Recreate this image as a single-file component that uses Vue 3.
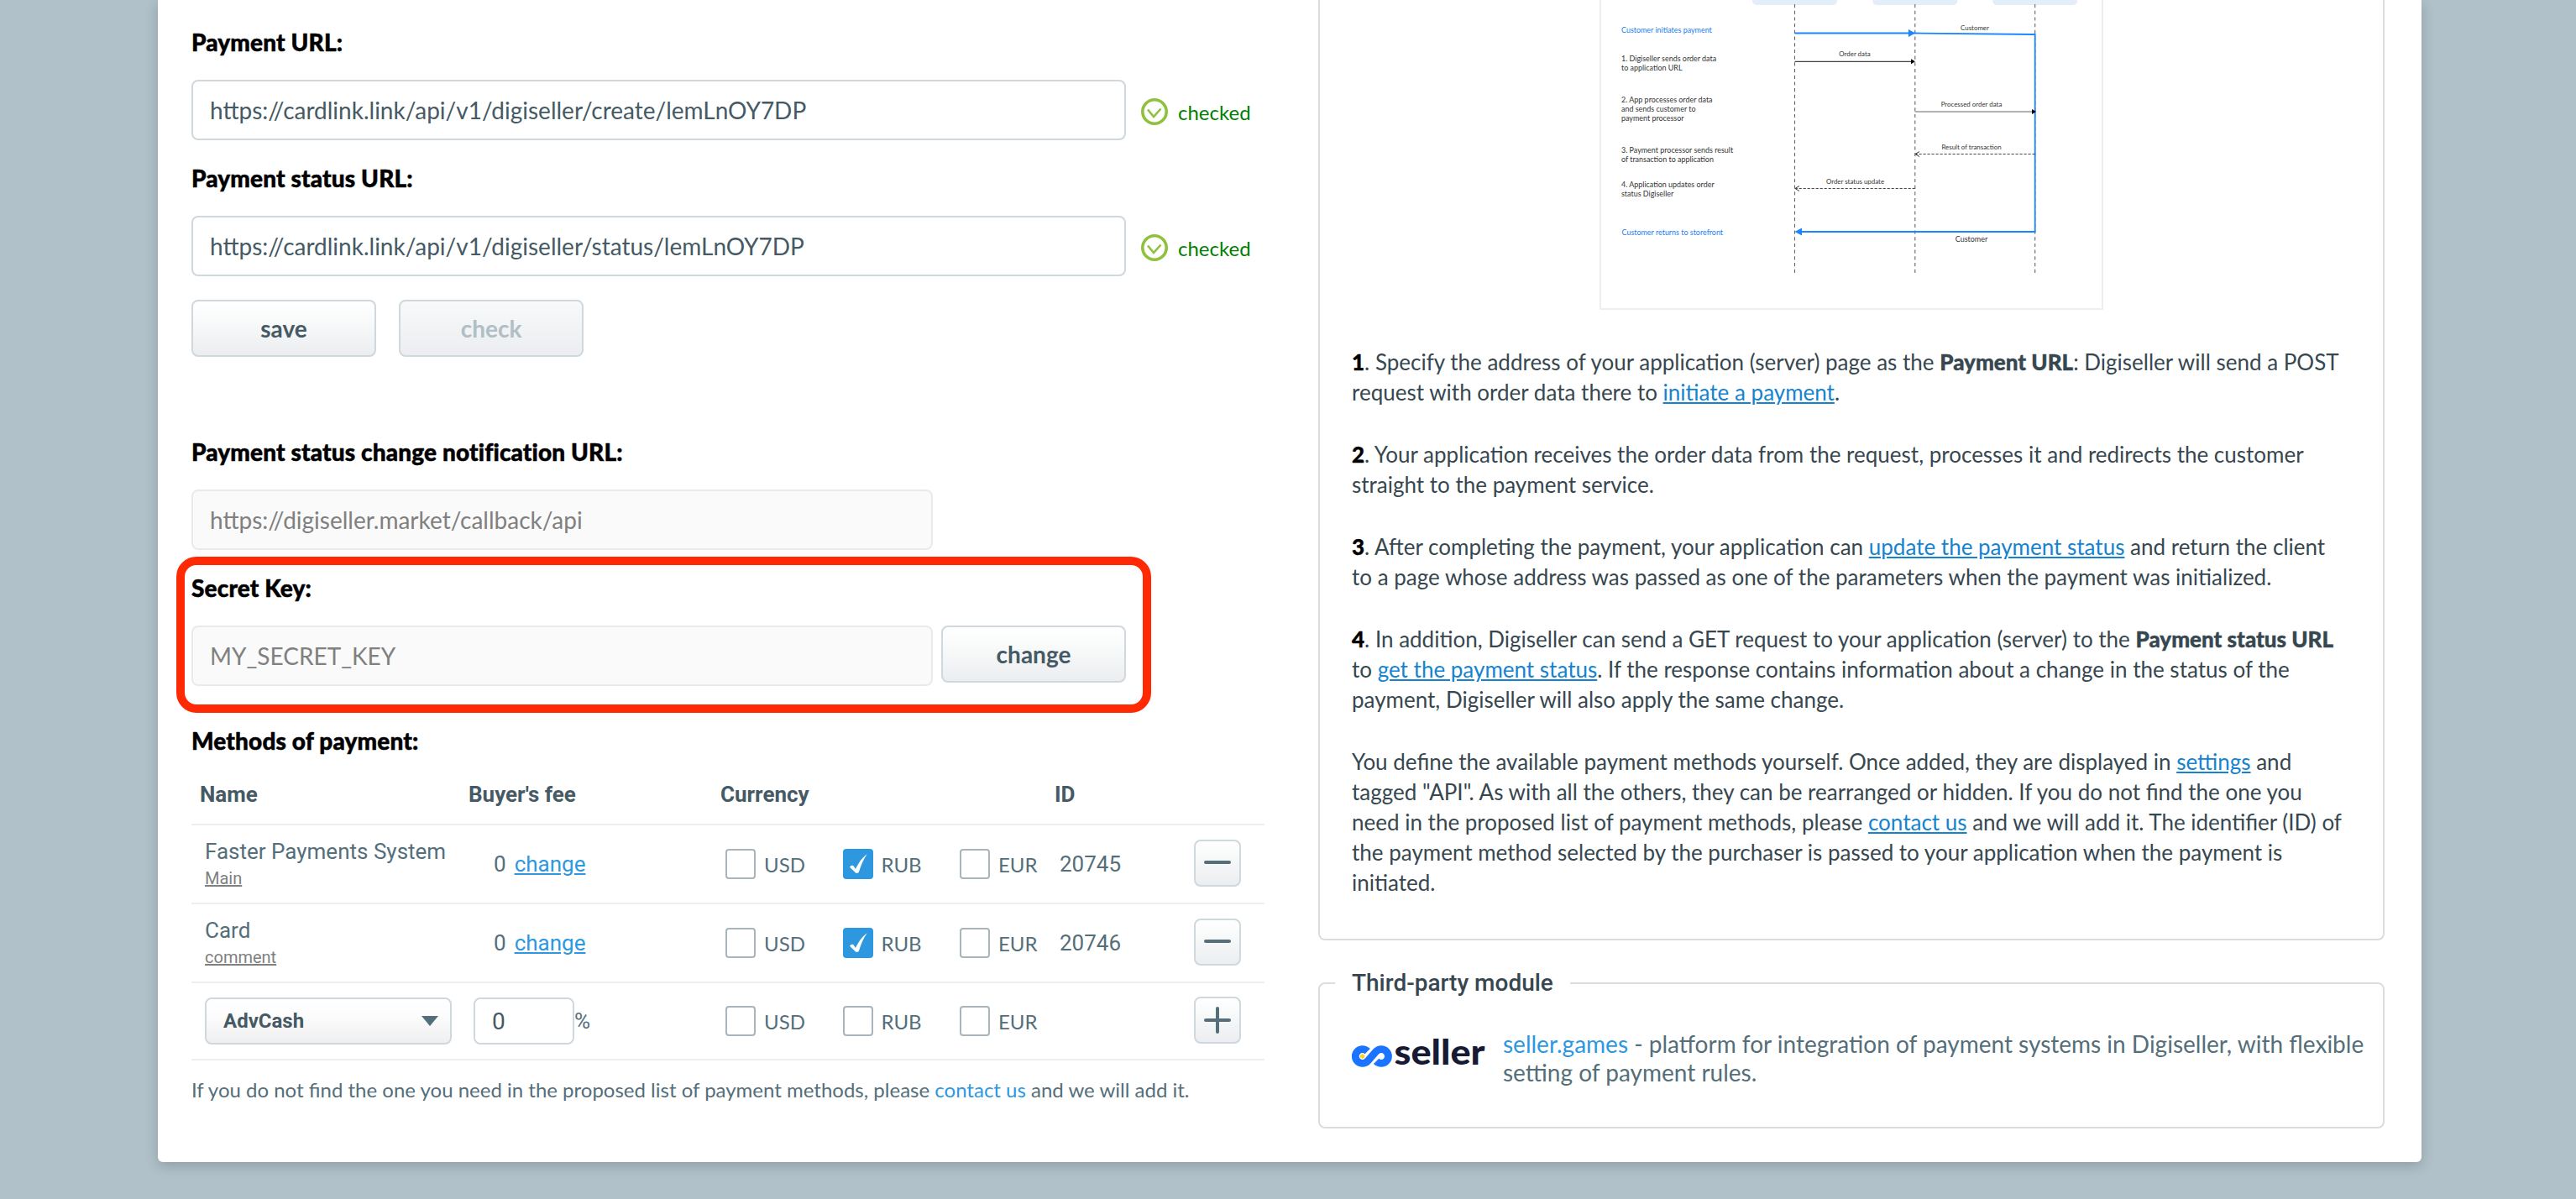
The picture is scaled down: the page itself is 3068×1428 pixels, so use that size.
<script setup>
import { ref } from 'vue'

const paymentUrl = ref('https://cardlink.link/api/v1/digiseller/create/lemLnOY7DP')
const statusUrl = ref('https://cardlink.link/api/v1/digiseller/status/lemLnOY7DP')
const callbackUrl = ref('https://digiseller.market/callback/api')
const secretKey = ref('MY_SECRET_KEY')
const newFee = ref('0')

const currencies = ['USD', 'RUB', 'EUR']

const methods = ref([
  { id: 20745, name: 'Faster Payments System', comment: 'Main', fee: 0, selected: ['RUB'] },
  { id: 20746, name: 'Card', comment: 'comment', fee: 0, selected: ['RUB'] }
])

// life lines of the sequence diagram
const lanes = [232.5, 375.8, 518.7]
</script>

<template>
  <div class="page">
    <div class="card">
      <div class="left">
        <div class="label">Payment URL:</div>
        <div class="line">
          <input class="field wide" v-model="paymentUrl">
          <div class="checked">
            <svg width="32" height="32" viewBox="0 0 32 32" fill="none" stroke="#8fc13e">
              <circle cx="16" cy="16" r="14.2" stroke-width="3.6" />
              <path d="M8 13.5l7 8.5 8.5-9.5" stroke-width="2.6" />
            </svg>
            <span>checked</span>
          </div>
        </div>
        <div class="label">Payment status URL:</div>
        <div class="line">
          <input class="field wide" v-model="statusUrl">
          <div class="checked">
            <svg width="32" height="32" viewBox="0 0 32 32" fill="none" stroke="#8fc13e">
              <circle cx="16" cy="16" r="14.2" stroke-width="3.6" />
              <path d="M8 13.5l7 8.5 8.5-9.5" stroke-width="2.6" />
            </svg>
            <span>checked</span>
          </div>
        </div>
        <div class="buttons">
          <button class="btn">save</button>
          <button class="btn" disabled>check</button>
        </div>

        <div class="label">Payment status change notification URL:</div>
        <input class="field" v-model="callbackUrl" disabled>
        <div class="secret">
          <div class="label">Secret Key:</div>
          <div class="line top">
            <input class="field" v-model="secretKey" disabled>
            <button class="btn change">change</button>
          </div>
        </div>

        <div class="label methods-label">Methods of payment:</div>
        <div class="table">
          <div class="row head">
            <div>Name</div>
            <div>Buyer's fee</div>
            <div>Currency</div>
            <div>ID</div>
          </div>
          <div class="row" v-for="m in methods" :key="m.id">
            <div class="name">
              <div>{{ m.name }}</div>
              <span class="comment">{{ m.comment }}</span>
            </div>
            <div class="fee">{{ m.fee }}<a class="link">change</a></div>
            <div class="currency">
              <label v-for="c in currencies" :key="c">
                <i class="box" :class="{ on: m.selected.includes(c) }">
                  <svg v-if="m.selected.includes(c)" width="36" height="36" viewBox="0 0 36 36">
                    <path d="M8.5 21c1.500-1.600 3.500-1.500 4.700.3l1.800 2.700C18 17.500 22.500 10.500 28.600 6.200 24.500 12.500 21.500 19 19 27.300c-.5 1.800-3.800 2.200-4.700.4L8.700 22.500c-.5-.6-.6-1-.2-1.500z" fill="#fff" />
                  </svg>
                </i>{{ c }}
              </label>
            </div>
            <div class="id">{{ m.id }}</div>
            <button class="square">
              <svg width="52" height="52" viewBox="0 0 52 52" stroke="#546e7a" stroke-width="4" stroke-linecap="round">
                <path d="M12 25h28" />
              </svg>
            </button>
          </div>
          <div class="row last">
            <div class="name">
              <div class="select">
                AdvCash
                <svg width="20" height="12" viewBox="0 0 20 12"><path d="M0 0h20L10 12z" fill="#546e7a" /></svg>
              </div>
            </div>
            <div class="fee-edit"><input v-model="newFee">%</div>
            <div class="currency">
              <label v-for="c in currencies" :key="c"><i class="box"></i>{{ c }}</label>
            </div>
            <div class="id"></div>
            <button class="square">
              <svg width="52" height="52" viewBox="0 0 52 52" stroke="#546e7a" stroke-width="4" stroke-linecap="round">
                <path d="M12 26h28M26 12v28" />
              </svg>
            </button>
          </div>
        </div>
        <div class="note">
          If you do not find the one you need in the proposed list of payment methods, please <a>contact us</a> and we will add it.
        </div>
      </div>

      <div class="right">
        <div class="info">
          <svg class="diagram" width="600" height="369" viewBox="0 0 600 369">
            <path d="M1 0v368h598V0" fill="none" stroke="#eee" stroke-width="2" />
            <g v-for="x in lanes" :key="x">
              <rect :x="x - 50.500" y="-20" width="101" height="26" rx="5" fill="#e3eef9" />
              <path :d="`M${x} 5v320`" stroke="#666" stroke-width="1.100" stroke-dasharray="4.200 3.500" />
            </g>
            <g fill="none" stroke="#1a86ff" stroke-width="1.800">
              <path d="M232.500 39.500h143.300L518.700 41v235H238" />
            </g>
            <path d="M368 35v9l8-4.500zM241 271.500v9l-8.500-4.500z" fill="#1a86ff" />
            <path d="M232.500 73.300H372" stroke="#111" />
            <path d="M371 70.300v6l5-3zM515 130v6l5-3z" fill="#000" />
            <path d="M375.800 133H515" stroke="#555" stroke-width=".9" />
            <path d="M518.700 183.500H377M375.800 224.500H234" stroke="#333" stroke-width=".9" stroke-dasharray="3.200 1.800" />
            <path d="M381 180.500l-5 3 5 3M238 221.500l-5 3 5 3" fill="none" stroke="#222" stroke-width=".9" />
            <g class="steps">
              <text x="26" y="39" class="blue">Customer initiates payment</text>
              <text x="26" y="73.300">1. Digiseller sends order data</text>
              <text x="26" y="84.200">to application URL</text>
              <text x="26" y="122">2. App processes order data</text>
              <text x="26" y="133">and sends customer to</text>
              <text x="26" y="144">payment processor</text>
              <text x="26" y="182">3. Payment processor sends result</text>
              <text x="26" y="193">of transaction to application</text>
              <text x="26" y="223">4. Application updates order</text>
              <text x="26" y="234">status Digiseller</text>
              <text x="26.500" y="280" class="blue">Customer returns to storefront</text>
            </g>
            <g class="arrows">
              <text x="447" y="36">Customer</text>
              <text x="304" y="67.300">Order data</text>
              <text x="443" y="127">Processed order data</text>
              <text x="443" y="178">Result of transaction</text>
              <text x="304.500" y="219">Order status update</text>
              <text x="443" y="288" class="big">Customer</text>
            </g>
          </svg>
          <p><b class="num">1</b>. Specify the address of your application (server) page as the <b>Payment URL</b>: Digiseller will send a POST<br>request with order data there to <a>initiate a payment</a>.</p>
          <p><b class="num">2</b>. Your application receives the order data from the request, processes it and redirects the customer<br>straight to the payment service.</p>
          <p><b class="num">3</b>. After completing the payment, your application can <a>update the payment status</a> and return the client<br>to a page whose address was passed as one of the parameters when the payment was initialized.</p>
          <p><b class="num">4</b>. In addition, Digiseller can send a GET request to your application (server) to the <b>Payment status URL</b><br>to <a>get the payment status</a>. If the response contains information about a change in the status of the<br>payment, Digiseller will also apply the same change.</p>
          <p>You define the available payment methods yourself. Once added, they are displayed in <a>settings</a> and<br>tagged "API". As with all the others, they can be rearranged or hidden. If you do not find the one you<br>need in the proposed list of payment methods, please <a>contact us</a> and we will add it. The identifier (ID) of<br>the payment method selected by the purchaser is passed to your application when the payment is<br>initiated.</p>
        </div>
        <div class="module">
          <div class="legend">Third-party module</div>
          <svg class="logo" width="170" height="52" viewBox="0 0 170 52">
            <path d="M18.700 18.100A8.400 8.400 0 1 0 18.700 29.900L29.100 18.100A8.400 8.400 0 1 1 29.100 29.900" fill="none" stroke="#1b74ff" stroke-width="8.800" />
            <circle cx="12.700" cy="24" r="2.700" fill="#ffd21e" />
            <text x="50.500" y="33.500" textLength="108" lengthAdjust="spacingAndGlyphs">seller</text>
          </svg>
          <div class="about"><a>seller.games</a> - platform for integration of payment systems in Digiseller, with flexible<br>setting of payment rules.</div>
        </div>
      </div>
    </div>
  </div>
</template>

<style>
body {
  margin: 0;
  background: #b0c1ca;
}
</style>

<style scoped>
.page {
  width: 3068px;
  height: 1428px;
  overflow: hidden;
  box-sizing: border-box;
  padding-left: 188px;
  background: #b0c1ca;
  font-family: Lato, sans-serif;
  color: #546e7a;
}
.card {
  display: flex;
  width: 2696px;
  height: 1384px;
  box-sizing: border-box;
  padding-left: 40px;
  background: #fff;
  border-radius: 0 0 6px 6px;
  box-shadow: 0 4px 16px rgba(0, 0, 0, .2);
}
.left {
  width: 1342px;
  padding-top: 5px;
}
.label {
  font-size: 28px;
  line-height: 90px;
  font-weight: 900;
  letter-spacing: .14px;
  font-variant-ligatures: common-ligatures;
  -webkit-text-stroke: .5px #000;
  color: #000;
}
.line {
  display: flex;
  align-items: center;
}
.line.top {
  align-items: flex-start;
}
.field {
  display: block;
  box-sizing: border-box;
  width: 883px;
  height: 72px;
  padding: 0 20px;
  border: 2px solid #cfd8dc;
  border-radius: 8px;
  background: #fff;
  font: 28px Lato, sans-serif;
  color: #455a64;
}
.field.wide {
  width: 1113px;
}
.field:disabled {
  background: #fafafa;
  border-color: #e7ebed;
  color: #808080;
}
.checked {
  display: flex;
  align-items: center;
  gap: 12px;
  margin: 4px 0 0 18px;
  font-size: 24px;
  color: #008000;
}
.buttons {
  display: flex;
  gap: 27px;
  margin: 28px 0 68px;
}
.btn {
  box-sizing: border-box;
  width: 220px;
  height: 68px;
  padding: 0;
  border: 2px solid #cfd8dc;
  border-radius: 8px;
  background: linear-gradient(#fff, #f8f9f9 40%, #ecedf0);
  font: bold 28px Lato, sans-serif;
  color: #455a64;
}
.btn:disabled {
  background: linear-gradient(#f8f9fa, #ecedf0);
  color: #b0bec5;
}
.btn.change {
  margin-left: 10px;
}
.secret {
  position: relative;
}
/* highlight frame around the secret key */
.secret::after {
  content: '';
  position: absolute;
  left: -18px;
  top: 8px;
  width: 1161px;
  height: 186px;
  box-sizing: border-box;
  border: 10px solid #ff2903;
  border-radius: 24px;
}
.methods-label {
  margin-top: 37px;
  line-height: 56px;
}
.table {
  width: 1278px;
  font: 26px Roboto, sans-serif;
}
.row {
  display: grid;
  grid-template-columns: 320px 300px 398px 176px 56px;
  align-items: center;
  height: 92px;
  border-bottom: 2px solid #eceeef;
}
.row.last {
  height: 90px;
}
.row.head {
  height: 71px;
  font-weight: bold;
  color: #455a64;
}
.head div {
  padding-left: 10px;
}
.name {
  padding-left: 16px;
}
.name > div {
  line-height: 36px;
}
.comment {
  display: block;
  margin: -1px 0 2px;
  font-size: 20px;
  line-height: 30px;
  color: #808080;
  text-decoration: underline;
}
.fee {
  padding-left: 40px;
}
.link {
  margin-left: 10px;
  color: #2d98df;
  text-decoration: underline;
}
.currency {
  display: flex;
  padding-left: 16px;
  font: 24px Lato, sans-serif;
}
.currency label {
  display: flex;
  flex: none;
  align-items: center;
  width: 139.500px;
}
.currency label:last-child {
  width: auto;
}
.box {
  box-sizing: border-box;
  width: 36px;
  height: 36px;
  margin-right: 10px;
  border: 2px solid #a9b5ba;
  border-radius: 4px;
  background: #fff;
}
.box.on {
  border: 0;
  background: #2d98df;
}
.box svg {
  display: block;
}
.id {
  padding-left: 16px;
}
.square {
  align-self: start;
  box-sizing: border-box;
  width: 56px;
  height: 56px;
  margin-top: 17px;
  padding: 0;
  border: 2px solid #cfd8dc;
  border-radius: 8px;
  background: linear-gradient(#fff, #f9fafa 30%, #ecedf0);
}
.last .square {
  margin-top: 16px;
}
.square svg {
  display: block;
}
.name .select {
  display: flex;
  align-items: center;
  justify-content: space-between;
  box-sizing: border-box;
  width: 294px;
  height: 56px;
  padding: 0 14px 0 20px;
  border: 2px solid #cfd8dc;
  border-radius: 8px;
  background: linear-gradient(#fff, #fcfcfc 40%, #efefef);
  font-size: 24px;
  font-weight: bold;
  color: #455a64;
}
.fee-edit {
  display: flex;
  align-items: center;
  padding-left: 16px;
}
.fee-edit input {
  box-sizing: border-box;
  width: 120px;
  height: 56px;
  padding: 0 20px;
  border: 2px solid #cfd8dc;
  border-radius: 8px;
  font: 28px Roboto, sans-serif;
  color: #455a64;
}
.note {
  margin-top: 17px;
  font-size: 24px;
  line-height: 36px;
  white-space: nowrap;
}
.note a,
.about a {
  color: #2d98df;
}
.right {
  width: 1270px;
}
.info {
  box-sizing: border-box;
  height: 1120px;
  padding: 0 38px;
  border: 2px solid #dadcdd;
  border-top: 0;
  border-radius: 0 0 8px 8px;
  font-size: 26px;
  line-height: 36px;
  color: #37474f;
  white-space: nowrap;
}
.diagram {
  display: block;
  margin: 0 auto 44px;
}
.steps {
  font-size: 8.950px;
  fill: #333;
}
.arrows {
  font-size: 7.900px;
  fill: #333;
  text-anchor: middle;
}
.arrows .big {
  font-size: 9px;
}
.steps .blue {
  fill: #1a7df0;
}
.info p {
  margin: 0 0 38px;
}
.info b {
  font-weight: 900;
  -webkit-text-stroke: .4px;
}
.info .num {
  color: #000;
}
.info a {
  color: #1583d0;
  text-decoration: underline;
}
.module {
  position: relative;
  display: flex;
  box-sizing: border-box;
  height: 174px;
  margin-top: 50px;
  padding: 54px 0 0 38px;
  border: 2px solid #dadcdd;
  border-radius: 8px;
  font-size: 28px;
  line-height: 34px;
  white-space: nowrap;
}
.legend {
  position: absolute;
  left: 18px;
  top: -19px;
  padding: 0 20px;
  background: #fff;
  font: 500 28px/36px Roboto, sans-serif;
  color: #37474f;
}
.logo {
  flex: none;
  margin: 8px 10px 0 0;
  overflow: visible;
  font: 900 41px Lato, sans-serif;
  fill: #171a35;
}
</style>
